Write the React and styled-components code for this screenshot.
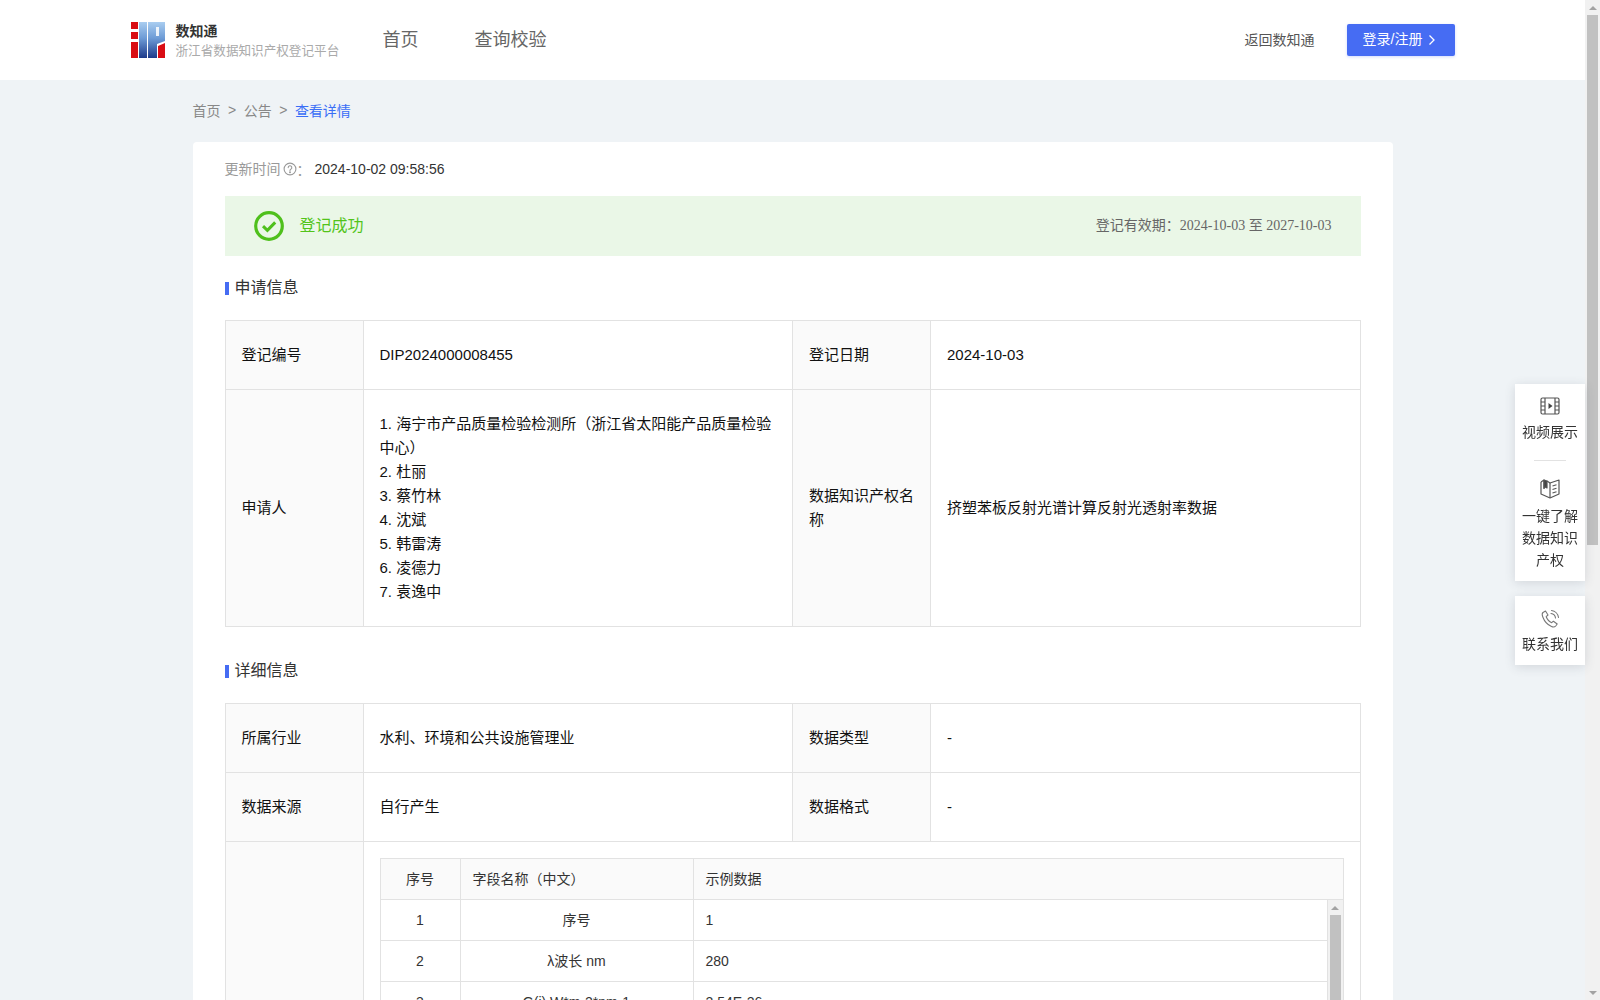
import React from "react";
import styled, { createGlobalStyle } from "styled-components";

const Global = createGlobalStyle`
  html, body { margin: 0; padding: 0; background: #eff3f6; }
  body { font-family: "Liberation Sans", "Noto Sans CJK SC", sans-serif; color: #333; font-size: 14px; overflow: hidden; }
  * { box-sizing: border-box; }
`;

const Shell = styled.div`
  display: flex;
  height: 100vh;
  overflow: hidden;
`;
const Page = styled.div`
  flex: 1;
  min-width: 0;
  height: 100%;
  overflow: hidden;
`;
const ScrollTrack = styled.div`
  flex: none;
  width: 15px;
  height: 100%;
  background: #f1f1f1;
  display: flex;
  flex-direction: column;
  align-items: center;
`;
const ScrollArrow = styled.div`
  flex: none;
  height: 15px;
  width: 100%;
  display: flex;
  align-items: center;
  justify-content: center;
  &::before {
    content: "";
    border-left: 4px solid transparent;
    border-right: 4px solid transparent;
    ${(p) => (p.$down ? "border-top: 4px solid #a3a3a3;" : "border-bottom: 4px solid #a3a3a3;")}
  }
`;
const ScrollThumb = styled.div`
  width: 11px;
  height: ${(p) => p.$size}px;
  background: #c1c1c1;
`;
const ScrollRest = styled.div`
  flex: 1;
`;

const Header = styled.header`
  height: 80px;
  background: #fff;
`;
const HeaderInner = styled.div`
  width: 1324px;
  height: 100%;
  margin: 0 auto;
  display: flex;
  align-items: center;
`;
const Brand = styled.div`
  display: flex;
  align-items: center;
  gap: 11px;
  width: 252px;
`;
const BrandText = styled.div`
  display: flex;
  flex-direction: column;
  gap: 2px;
`;
const BrandTitle = styled.div`
  font-size: 14px;
  line-height: 20px;
  font-weight: 700;
  color: #333;
`;
const BrandSub = styled.div`
  font-size: 12.6px;
  line-height: 17px;
  color: #aaa;
  white-space: nowrap;
`;
const Nav = styled.nav`
  display: flex;
  gap: 56px;
  flex: 1;
`;
const NavLink = styled.a`
  font-size: 18px;
  color: #666;
  line-height: 24px;
`;
const BackLink = styled.a`
  font-size: 14px;
  color: #555;
  margin-right: 32px;
  padding-bottom: 2px;
`;
const LoginButton = styled.button`
  width: 108px;
  height: 32px;
  padding: 0 2px 4px 0;
  border: 0;
  border-radius: 2px;
  background: #466cf3;
  box-shadow: 0 1px 3px rgba(70, 108, 243, 0.25);
  color: #fff;
  font: inherit;
  font-size: 14px;
  display: flex;
  align-items: center;
  justify-content: center;
  gap: 6px;
`;

const Main = styled.main`
  width: 1200px;
  margin: 0 auto;
`;
const Breadcrumb = styled.div`
  height: 62px;
  padding-bottom: 2px;
  display: flex;
  align-items: center;
  font-size: 14px;
  color: #888;
`;
const Crumb = styled.span`
  color: ${(p) => (p.$active ? "#3a6ef6" : "#888")};
`;
const CrumbSep = styled.span`
  margin: 0 7.5px;
`;
const Card = styled.section`
  background: #fff;
  border-radius: 4px;
  padding: 16px 32px 40px;
`;
const UpdateRow = styled.div`
  height: 22px;
  display: flex;
  align-items: center;
  font-size: 14px;
  color: #999;
`;
const UpdateLabel = styled.span`
  padding-bottom: 2px;
`;
const UpdateDate = styled.span`
  color: #333;
  margin-left: 4px;
`;
const Banner = styled.div`
  margin-top: 16px;
  height: 60px;
  background: #eaf7e7;
  display: flex;
  align-items: center;
  justify-content: space-between;
  padding: 0 29px;
`;
const BannerStatus = styled.div`
  display: flex;
  align-items: center;
  gap: 16px;
  font-size: 16px;
  color: #52c41a;
  span {
    padding-bottom: 5px;
  }
`;
const Validity = styled.div`
  font-size: 14px;
  color: #666;
  padding-bottom: 4px;
`;
const Serif = styled.span`
  font-family: "Liberation Serif", "Noto Sans CJK SC", serif;
`;
const SectionTitle = styled.h2`
  margin: ${(p) => p.$top}px 0 0;
  height: 22px;
  padding-bottom: 2px;
  display: flex;
  align-items: center;
  gap: 6px;
  font-size: 16px;
  font-weight: 400;
  color: #333;
  &::before {
    content: "";
    width: 4px;
    height: 13px;
    margin-top: 4px;
    background: #466cf3;
  }
`;
const InfoTable = styled.table`
  width: 1136px;
  margin-top: 22px;
  border-collapse: collapse;
  table-layout: fixed;
  font-size: 15px;
  line-height: 24px;
  color: #111;
`;
const LabelCell = styled.th`
  width: 138px;
  padding: 16px;
  font-weight: 400;
  text-align: left;
  background: #fafafa;
  border: 1px solid #e2e2e2;
`;
const ValueCell = styled.td`
  padding: ${(p) => (p.$list ? "22px 16px" : "16px")};
  height: 69px;
  border: 1px solid #e2e2e2;
  word-break: break-all;
`;
const SampleBox = styled.div`
  width: 964px;
  border: 1px solid #e2e2e2;
  font-size: 14px;
  color: #333;
`;
const SampleRow = styled.div`
  display: grid;
  grid-template-columns: 80px 233px 1fr;
  height: 41px;
  border-bottom: 1px solid #e2e2e2;
  background: ${(p) => (p.$head ? "#fafafa" : "#fff")};
`;
const SampleCell = styled.div`
  display: flex;
  align-items: center;
  justify-content: ${(p) => (p.$center ? "center" : "flex-start")};
  padding: 0 12px;
  border-right: 1px solid #e2e2e2;
  &:last-child {
    border-right: 0;
  }
`;
const SampleBody = styled.div`
  display: flex;
  height: 400px;
  overflow: hidden;
`;
const SampleRows = styled.div`
  flex: 1;
  min-width: 0;
  border-right: 1px solid #e2e2e2;
`;

const SideFloat = styled.aside`
  position: fixed;
  right: 15px;
  top: 384px;
  width: 70px;
  display: flex;
  flex-direction: column;
  gap: 15px;
`;
const SideCard = styled.div`
  background: #fff;
  box-shadow: 0 2px 10px rgba(60, 70, 90, 0.16);
  padding: 13px 0 10px;
`;
const SideItem = styled.div`
  display: flex;
  flex-direction: column;
  align-items: center;
  color: #333;
  font-size: 14px;
  line-height: 22px;
  text-align: center;
  padding: 0 6px;
  svg {
    display: block;
    margin-bottom: ${(p) => p.$iconGap ?? 6}px;
  }
`;
const SideDivider = styled.div`
  width: 32px;
  height: 1px;
  margin: 17px auto 17px;
  background: #e2e2e2;
`;

const Logo = () => (
  <svg width="34" height="36" viewBox="0 0 34 36" aria-hidden="true">
    <defs>
      <linearGradient id="lg" x1="0" y1="0" x2="0" y2="1">
        <stop offset="0" stopColor="#a9cdf0" />
        <stop offset="0.45" stopColor="#6d9bd6" />
        <stop offset="1" stopColor="#1d3a8a" />
      </linearGradient>
    </defs>
    <rect x="0" y="0" width="7" height="7" fill="#d90d14" />
    <rect x="0" y="10" width="7" height="7" fill="#d90d14" />
    <rect x="0" y="20" width="7" height="16" fill="#d90d14" />
    <rect x="8" y="0" width="8" height="36" fill="url(#lg)" />
    <path d="M17 0h17v19l-8 3v14h-9z" fill="url(#lg)" />
    <rect x="25" y="5" width="3" height="9" fill="#fff" opacity="0.85" />
    <path d="M27 24l7-3v15h-7z" fill="#d90d14" />
  </svg>
);
const Question = () => (
  <svg width="14" height="14" viewBox="0 0 14 14" fill="none" stroke="#999" strokeWidth="1.1" style={{ marginLeft: 2 }} aria-hidden="true">
    <circle cx="7" cy="7" r="5.9" />
    <path d="M5.2 5.6a1.8 1.8 0 1 1 2.6 1.6c-.6.3-.8.6-.8 1.2" strokeLinecap="round" />
    <circle cx="7" cy="10.2" r=".4" fill="#999" />
  </svg>
);
const Check = () => (
  <svg width="30" height="30" viewBox="0 0 30 30" fill="none" aria-hidden="true">
    <circle cx="15" cy="15" r="13.3" stroke="#4fc01c" strokeWidth="3.2" />
    <path d="M9 15.2l4.4 4.2 7.8-8" stroke="#4fc01c" strokeWidth="3" />
  </svg>
);
const Chevron = () => (
  <svg width="8" height="12" viewBox="0 0 8 12" fill="none" stroke="#fff" strokeWidth="1.3" style={{ marginTop: 4 }} aria-hidden="true">
    <path d="M1.5 1.5L6 6l-4.5 4.500" />
  </svg>
);
const FilmIcon = () => (
  <svg width="20" height="18" viewBox="0 0 20 18" fill="none" stroke="#555" strokeWidth="1.2" aria-hidden="true">
    <rect x="1" y="1" width="18" height="16" rx="1.5" />
    <path d="M5 1v16M15 1v16M1 5h4M1 9h4M1 13h4M15 5h4M15 9h4M15 13h4" />
    <path d="M8.500 6l4 3-4 3z" fill="#444" stroke="none" />
  </svg>
);
const BookIcon = () => (
  <svg width="22" height="21" viewBox="0 0 22 21" fill="none" stroke="#555" strokeWidth="1.2" strokeLinejoin="round" aria-hidden="true">
    <path d="M2 4v12l9 4 9-4V2l-9 3-3-2" />
    <path d="M2 4l3-2v9" />
    <path d="M11 5v15" />
    <path d="M13.500 8l4-1.200M13.500 11.500l4-1.200M13.500 15l4-1.200" />
    <path d="M5 2l3 1v7l-1.500-1-1.500 1z" fill="#444" />
  </svg>
);
const PhoneIcon = () => (
  <svg width="20" height="20" viewBox="0 0 20 20" fill="none" stroke="#777" strokeWidth="1.1" strokeLinecap="round" strokeLinejoin="round" aria-hidden="true">
    <path d="M5.500 2L3 3.500c-1 .8-1 2.500-.2 4.500 1.500 4 5 8 8.700 9.500 1.800.8 3.300.5 4.200-.5l1.500-2-3.800-2.800-1.700 1.500c-2-.8-4.500-3.500-5.500-6L8 6z" />
    <path d="M11 4.500a5 5 0 0 1 4.500 4.500M11.500 1.500a8 8 0 0 1 7 7" />
  </svg>
);

const sampleRows = [
  ["1", "序号", "1"],
  ["2", "λ波长 nm", "280"],
  ["3", "G(i) W*m-2*nm-1", "2.54E-26"],
];

const applicants = ["海宁市产品质量检验检测所（浙江省太阳能产品质量检验中心）", "杜丽", "蔡竹林", "沈斌", "韩雷涛", "凌德力", "袁逸中"];

export default function App() {
  return (
    <Shell>
      <Global />
      <Page>
        <Header>
          <HeaderInner>
            <Brand>
              <Logo />
              <BrandText>
                <BrandTitle>数知通</BrandTitle>
                <BrandSub>浙江省数据知识产权登记平台</BrandSub>
              </BrandText>
            </Brand>
            <Nav>
              <NavLink>首页</NavLink>
              <NavLink>查询校验</NavLink>
            </Nav>
            <BackLink>返回数知通</BackLink>
            <LoginButton>
              登录/注册 <Chevron />
            </LoginButton>
          </HeaderInner>
        </Header>
        <Main>
          <Breadcrumb>
            <Crumb>首页</Crumb>
            <CrumbSep>&gt;</CrumbSep>
            <Crumb>公告</Crumb>
            <CrumbSep>&gt;</CrumbSep>
            <Crumb $active>查看详情</Crumb>
          </Breadcrumb>
          <Card>
            <UpdateRow>
              <UpdateLabel>更新时间</UpdateLabel>
              <Question />：<UpdateDate>2024-10-02 09:58:56</UpdateDate>
            </UpdateRow>
            <Banner>
              <BannerStatus>
                <Check />
                <span>登记成功</span>
              </BannerStatus>
              <Validity>
                登记有效期：<Serif>2024-10-03 至 2027-10-03</Serif>
              </Validity>
            </Banner>
            <SectionTitle $top={20}>申请信息</SectionTitle>
            <InfoTable>
              <tbody>
                <tr>
                  <LabelCell>登记编号</LabelCell>
                  <ValueCell>DIP2024000008455</ValueCell>
                  <LabelCell>登记日期</LabelCell>
                  <ValueCell>2024-10-03</ValueCell>
                </tr>
                <tr>
                  <LabelCell>申请人</LabelCell>
                  <ValueCell $list>
                    {applicants.map((a, i) => (
                      <div key={a}>
                        {i + 1}. {a}
                      </div>
                    ))}
                  </ValueCell>
                  <LabelCell>数据知识产权名称</LabelCell>
                  <ValueCell>挤塑苯板反射光谱计算反射光透射率数据</ValueCell>
                </tr>
              </tbody>
            </InfoTable>
            <SectionTitle $top={32}>详细信息</SectionTitle>
            <InfoTable>
              <tbody>
                <tr>
                  <LabelCell>所属行业</LabelCell>
                  <ValueCell>水利、环境和公共设施管理业</ValueCell>
                  <LabelCell>数据类型</LabelCell>
                  <ValueCell>-</ValueCell>
                </tr>
                <tr>
                  <LabelCell>数据来源</LabelCell>
                  <ValueCell>自行产生</ValueCell>
                  <LabelCell>数据格式</LabelCell>
                  <ValueCell>-</ValueCell>
                </tr>
                <tr>
                  <LabelCell></LabelCell>
                  <ValueCell colSpan={3}>
                    <SampleBox>
                      <SampleRow $head>
                        <SampleCell $center>序号</SampleCell>
                        <SampleCell>字段名称（中文）</SampleCell>
                        <SampleCell>示例数据</SampleCell>
                      </SampleRow>
                      <SampleBody>
                        <SampleRows>
                          {sampleRows.map((r) => (
                            <SampleRow key={r[0]}>
                              <SampleCell $center>{r[0]}</SampleCell>
                              <SampleCell $center>{r[1]}</SampleCell>
                              <SampleCell>{r[2]}</SampleCell>
                            </SampleRow>
                          ))}
                        </SampleRows>
                        <ScrollTrack>
                          <ScrollArrow />
                          <ScrollThumb $size={300} />
                          <ScrollRest />
                          <ScrollArrow $down />
                        </ScrollTrack>
                      </SampleBody>
                    </SampleBox>
                  </ValueCell>
                </tr>
              </tbody>
            </InfoTable>
          </Card>
        </Main>
      </Page>
      <ScrollTrack>
        <ScrollArrow />
        <ScrollThumb $size={530} />
        <ScrollRest />
        <ScrollArrow $down />
      </ScrollTrack>
      <SideFloat>
        <SideCard>
          <SideItem>
            <FilmIcon />
            视频展示
          </SideItem>
          <SideDivider />
          <SideItem>
            <BookIcon />
            一键了解数据知识产权
          </SideItem>
        </SideCard>
        <SideCard>
          <SideItem $iconGap={4}>
            <PhoneIcon />
            联系我们
          </SideItem>
        </SideCard>
      </SideFloat>
    </Shell>
  );
}
